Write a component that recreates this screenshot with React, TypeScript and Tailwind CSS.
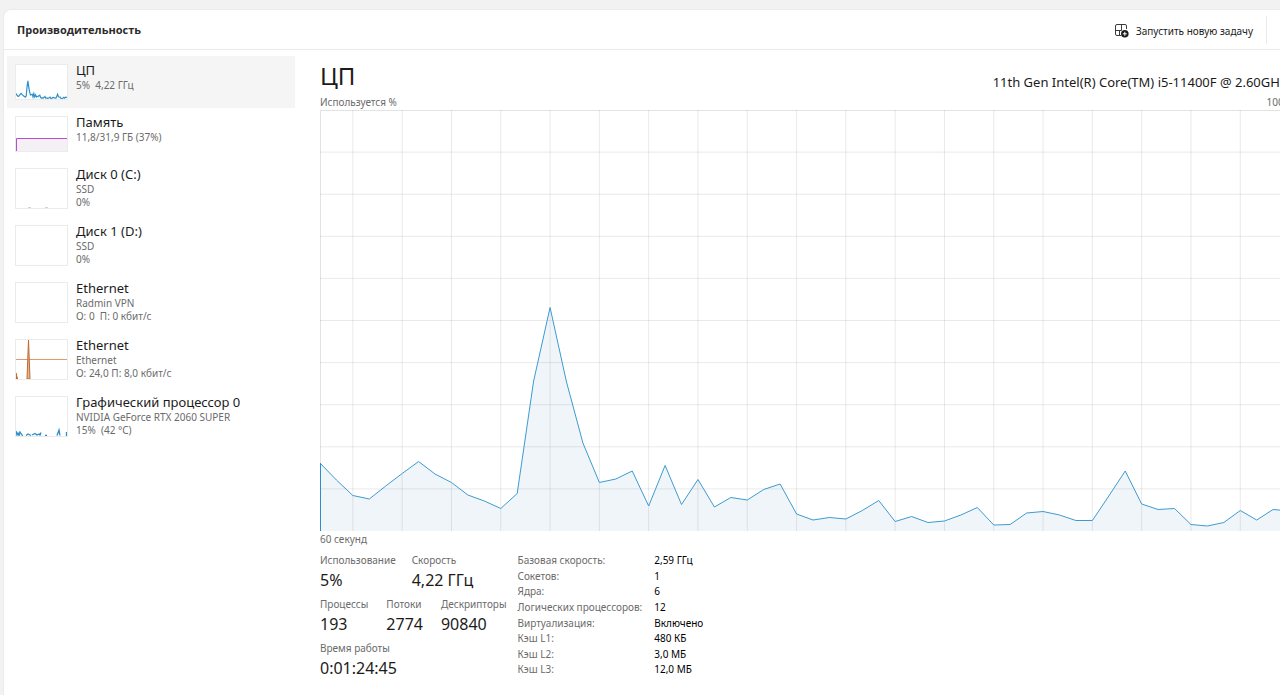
import type { ReactNode } from "react";

const load = [
  68, 51, 35.5, 32, 45, 57.5, 69.5, 57, 48.5, 36, 30, 22.5, 37.5, 150, 223.5, 149, 88, 48.5, 52, 60,
  25, 65.5, 26.5, 51.5, 24, 33.5, 31, 41.5, 47, 17, 11, 13.5, 12, 20.5, 30.5, 9.5, 14.5, 8.5, 10, 16,
  23.5, 6, 6.5, 18, 19.5, 16, 10.5, 10.5, 35, 60, 27, 21.5, 22.5, 6.5, 5, 8.5, 20.5, 11, 21.5, 20, 22,
];

const columns = Array.from({ length: 20 }, (_, i) => 2 + i * 3);
const rows = Array.from({ length: 9 }, (_, i) => (i + 1) * 42.1);

function linePath(width: number, height: number) {
  return load
    .map((v, i) => `${i === 0 ? "M" : "L"}${((i * width) / 60).toFixed(2)} ${(height - (v * height) / 421).toFixed(2)}`)
    .join("");
}

function CpuChart() {
  const line = linePath(986, 421);
  return (
    <svg
      className="block h-[421px] w-full"
      viewBox="0 0 986 421"
      preserveAspectRatio="none"
      role="img"
      aria-label="Используется %"
    >
      <path d={`${line}L986 421L0 421Z`} fill="#f0f5f9" />
      <g stroke="#000000" strokeOpacity="0.085" strokeWidth="1">
        {columns.map((c) => (
          <line key={c} x1={(c * 986) / 60} x2={(c * 986) / 60} y1="0" y2="421" vectorEffect="non-scaling-stroke" />
        ))}
        {rows.map((y) => (
          <line key={y} x1="0" x2="986" y1={y} y2={y} vectorEffect="non-scaling-stroke" />
        ))}
        <path d="M0.5 421V0.5H985.5V421" fill="none" strokeOpacity="0.11" />
      </g>
      <path d={line} fill="none" stroke="#3d9bd0" strokeWidth="1" vectorEffect="non-scaling-stroke" />
      <path d="M0.5 353V421" stroke="#2a8fd0" strokeWidth="1" />
    </svg>
  );
}

function Thumb({ tall, children }: { tall?: boolean; children?: ReactNode }) {
  return (
    <svg
      className={`mt-0.5 w-[53px] shrink-0 border border-[#ebebeb] bg-white ${tall ? "h-[41px]" : "h-9"}`}
      viewBox={tall ? "0 0 51 39" : "0 0 51 34"}
      fill="none"
      aria-hidden="true"
    >
      {children}
    </svg>
  );
}

type Resource = { id: string; title: string; lines: string[]; tall?: boolean; art?: ReactNode };

const resources: Resource[] = [
  {
    id: "cpu",
    title: "ЦП",
    lines: ["5%  4,22 ГГц"],
    art: <path d={linePath(51, 34)} stroke="#2f90ca" strokeWidth="1.2" />,
  },
  {
    id: "memory",
    title: "Память",
    lines: ["11,8/31,9 ГБ (37%)"],
    art: (
      <>
        <path d="M0 21H51V34H0Z" fill="#f4f0f5" />
        <path d="M0.5 34V21.5H51" stroke="#b351cb" />
      </>
    ),
  },
  {
    id: "disk0",
    title: "Диск 0 (C:)",
    lines: ["SSD", "0%"],
    tall: true,
    art: <path d="M12 38.5H15M29 38.5H32" stroke="#c5e2b5" />,
  },
  { id: "disk1", title: "Диск 1 (D:)", lines: ["SSD", "0%"], tall: true },
  { id: "vpn", title: "Ethernet", lines: ["Radmin VPN", "О: 0  П: 0 кбит/с"], tall: true },
  {
    id: "lan",
    title: "Ethernet",
    lines: ["Ethernet", "О: 24,0 П: 8,0 кбит/с"],
    tall: true,
    art: (
      <>
        <path d="M0 19.5H51" stroke="#dc9a70" />
        <path d="M11 39L12.5 0L14 39Z" fill="#e3b596" stroke="#bd6a2e" />
        <path d="M0 33L1.5 39H0Z" fill="#bd6a2e" stroke="#bd6a2e" />
      </>
    ),
  },
  {
    id: "gpu",
    title: "Графический процессор 0",
    lines: ["NVIDIA GeForce RTX 2060 SUPER", "15%  (42 °C)"],
    tall: true,
    art: (
      <path
        d="M0 34L1 38L2 36L3 38.5L4 35L6 38L7 38.5M10 38.5L12 37L14 38L15 38.5M16 38L19 36.5L21 38L23 37L24 38L25 35.5M29 38.5H31M41 38.5L43 33L44 38.5M50.5 35V39"
        stroke="#2f8cc4"
        strokeWidth="1.3"
      />
    ),
  },
];

function ResourceItem({ item, active }: { item: Resource; active: boolean }) {
  return (
    <li>
      <button
        type="button"
        aria-pressed={active}
        className={`flex w-full items-start gap-2 px-2 pt-1.5 pb-2 text-left ${active ? "bg-[#f5f5f5]" : ""}`}
      >
        <Thumb tall={item.tall}>{item.art}</Thumb>
        <span className="flex min-w-0 flex-col">
          <span className="mb-px text-[13px] leading-4 text-[#1b1b1b]">{item.title}</span>
          {item.lines.map((line) => (
            <span key={line} className="text-[10px] leading-[13px] whitespace-pre text-[#6b6b6b]">
              {line}
            </span>
          ))}
        </span>
      </button>
    </li>
  );
}

function Stat({ label, value }: { label: string; value: string }) {
  return (
    <div className="flex flex-col">
      <dt className="text-[10px] leading-4 text-[#6b6b6b]">{label}</dt>
      <dd className="text-[16px] leading-6 text-[#1b1b1b]">{value}</dd>
    </div>
  );
}

const statRows = [
  [
    ["Использование", "5%"],
    ["Скорость", "4,22 ГГц"],
  ],
  [
    ["Процессы", "193"],
    ["Потоки", "2774"],
    ["Дескрипторы", "90840"],
  ],
  [["Время работы", "0:01:24:45"]],
];

const details = [
  ["Базовая скорость:", "2,59 ГГц"],
  ["Сокетов:", "1"],
  ["Ядра:", "6"],
  ["Логических процессоров:", "12"],
  ["Виртуализация:", "Включено"],
  ["Кэш L1:", "480 КБ"],
  ["Кэш L2:", "3,0 МБ"],
  ["Кэш L3:", "12,0 МБ"],
];

function NewTaskIcon() {
  return (
    <svg className="size-[14px]" viewBox="0 0 14 14" fill="none" aria-hidden="true">
      <path d="M6 11.5H2A1.5 1.5 0 0 1 0.5 10V2A1.5 1.5 0 0 1 2 0.5H10A1.5 1.5 0 0 1 11.5 2V5M6.5 0.5V6.5M4.5 6.5V11.5M0.5 6.5H6.5" stroke="#3a3a3a" />
      <circle cx="9.8" cy="9.8" r="3.8" fill="#1b1b1b" />
      <path d="M9.8 7.8V11.8M7.8 9.8H11.8" stroke="#ffffff" />
    </svg>
  );
}

export default function App() {
  return (
    <div className="min-h-screen overflow-hidden bg-[#f2f2f2] pt-[9px] pl-[3px] font-['Noto_Sans',sans-serif]">
      <div className="flex min-h-[calc(100vh-9px)] w-[calc(100%+26px)] flex-col rounded-tl-lg border-t border-l border-[#ebebeb] bg-white">
        <header className="flex h-10 items-center justify-between border-b border-[#ebebeb] pr-[39px] pl-[13px]">
          <h1 className="font-['Open_Sans',sans-serif] text-[11px] leading-4 font-bold text-[#2b2b2b]">
            Производительность
          </h1>
          <div className="flex h-7 items-center border-r border-[#ebebeb] pr-[13px]">
            <button type="button" className="flex items-center gap-[7px] pt-0.5 text-[10px] leading-4 text-[#1b1b1b]">
              <NewTaskIcon />
              Запустить новую задачу
            </button>
          </div>
        </header>
        <div className="flex flex-1">
          <nav className="w-[291px] shrink-0 pt-1.5 pl-[3px]" aria-label="Ресурсы">
            <ul>
              {resources.map((item, i) => (
                <ResourceItem key={item.id} item={item} active={i === 0} />
              ))}
            </ul>
          </nav>
          <main className="min-w-0 flex-1 pt-2 pl-[25px]">
            <div className="flex items-end justify-between">
              <h2 className="text-[24px] leading-9 text-[#1b1b1b]">ЦП</h2>
              <p className="pr-5 text-[13px] leading-6 text-[#1b1b1b]">
                11th Gen Intel(R) Core(TM) i5-11400F @ 2.60GHz
              </p>
            </div>
            <div className="flex justify-between text-[10px] leading-4 text-[#6b6b6b]">
              <span>Используется %</span>
              <span className="pr-3.5">100%</span>
            </div>
            <CpuChart />
            <p className="text-[10px] leading-4 text-[#6b6b6b]">60 секунд</p>
            <div className="flex items-start gap-[11px] pt-[5px]">
              <div className="flex flex-col gap-1">
                {statRows.map((row) => (
                  <dl key={row[0][0]} className={`flex ${row.length > 2 ? "gap-[18px]" : "gap-4"}`}>
                    {row.map(([label, value]) => (
                      <Stat key={label} label={label} value={value} />
                    ))}
                  </dl>
                ))}
              </div>
              <dl className="grid h-[125px] grid-cols-[auto_auto] grid-rows-8 gap-x-3 text-[10px] leading-4">
                {details.map(([label, value]) => (
                  <div key={label} className="contents">
                    <dt className="text-[#6b6b6b]">{label}</dt>
                    <dd className="text-black">{value}</dd>
                  </div>
                ))}
              </dl>
            </div>
          </main>
        </div>
      </div>
    </div>
  );
}
